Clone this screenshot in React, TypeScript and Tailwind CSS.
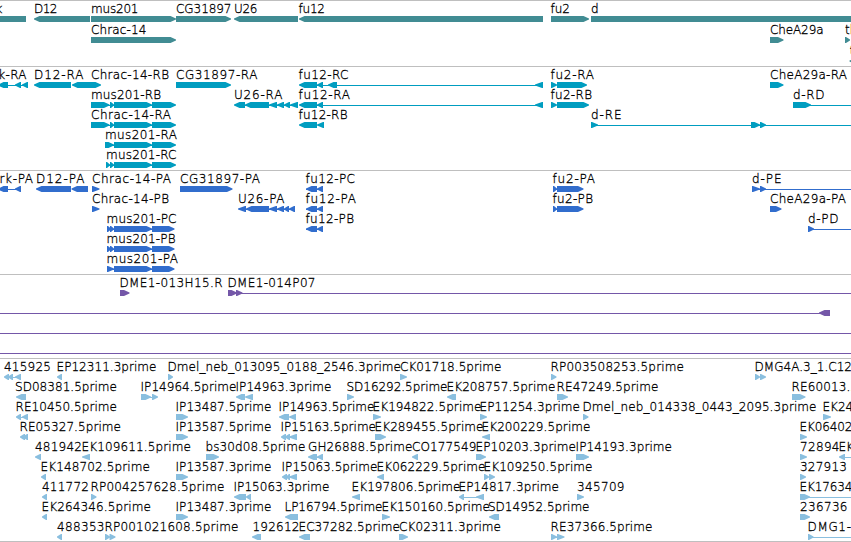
import React from "react";

type Dir = "l" | "r";
// [start, end, direction]
type Block = [number, number, Dir];
// [text, start, end] - end is left out when the label runs off the view
type Label = [string, number, number?];

type Row = {
  labels?: Label[];
  blocks?: Block[];
  lines?: [number, number][];
};

type TrackData = {
  name: string;
  color: string;
  height: number;
  pitch: number;
  rows: Row[];
};

const VIEW_WIDTH = 851;

const mus201Tail: Block[] = [
  [114, 152, "r"],
  [152, 176, "r"],
];

const mus201ProteinTail: Block[] = [
  [114, 152, "r"],
  [152, 174.5, "r"],
];

const genes: Row[] = [
  {
    labels: [
      ["k", -4.5],
      ["D12", 34, 58],
      ["mus201", 91, 139],
      ["CG31897", 176, 232],
      ["U26", 234, 258],
      ["fu12", 298.5, 325.5],
      ["fu2", 550.5, 570.5],
      ["d", 591],
    ],
    blocks: [
      [-20, 26, "l"],
      [34, 90, "l"],
      [91, 176, "r"],
      [176, 231, "r"],
      [234, 298, "l"],
      [299, 543, "l"],
      [551, 589, "r"],
      [591, 870, "r"],
    ],
  },
  {
    labels: [["Chrac-14", 91, 147], ["CheA29a", 770, 824], ["th", 845]],
    blocks: [
      [91, 176, "r"],
      [770, 783.5, "r"],
      [845, 850, "r"],
    ],
  },
  {
    labels: [["t", 849.7]],
    blocks: [[849.5, 870, "l"]],
  },
];

const transcripts: Row[] = [
  {
    labels: [
      ["rk-RA", -7, 27],
      ["D12-RA", 34, 84],
      ["Chrac-14-RB", 91, 169.5],
      ["CG31897-RA", 176, 258],
      ["fu12-RC", 298.5, 349],
      ["fu2-RA", 550.5, 594.5],
      ["CheA29a-RA", 770, 847.5],
    ],
    blocks: [
      [-2, 8, "l"],
      [15, 21, "l"],
      [22, 28, "l"],
      [34, 71, "l"],
      [72, 90.5, "l"],
      [90, 101, "r"],
      [176, 231, "r"],
      [299, 317, "l"],
      [317, 323, "l"],
      [328, 337, "l"],
      [535, 543, "l"],
      [551, 557, "r"],
      [557, 587, "r"],
      [770, 783.5, "r"],
    ],
    lines: [[0, 28], [317, 543]],
  },
  {
    labels: [
      ["mus201-RB", 91, 161.5],
      ["U26-RA", 234, 283],
      ["fu12-RA", 298.5, 350.5],
      ["fu2-RB", 550.5, 592.5],
      ["d-RD", 793, 825],
    ],
    blocks: [
      [91, 109.5, "r"],
      [110, 114, "r"],
      ...mus201Tail,
      [234, 245, "l"],
      [245, 269, "l"],
      [269, 277, "l"],
      [277, 284, "l"],
      [284, 290, "l"],
      [290, 298, "l"],
      [299, 317, "l"],
      [317, 323, "l"],
      [535, 543, "l"],
      [551, 557, "r"],
      [557, 589, "r"],
      [793, 811, "r"],
    ],
    lines: [[105, 160], [240, 298], [317, 543], [805, 851]],
  },
  {
    labels: [
      ["Chrac-14-RA", 91, 171.5],
      ["fu12-RB", 298.5, 348],
      ["d-RE", 591, 622],
    ],
    blocks: [
      [91, 109.5, "r"],
      [110, 114, "r"],
      ...mus201Tail,
      [299, 317, "l"],
      [317, 324, "l"],
      [591, 598, "r"],
      [751, 760, "r"],
      [760, 766, "r"],
    ],
    lines: [[105, 160], [591, 851]],
  },
  {
    labels: [["mus201-RA", 105, 177.5]],
    blocks: [[105, 114, "r"], ...mus201Tail],
    lines: [[110, 160]],
  },
  {
    labels: [["mus201-RC", 106, 177]],
    blocks: [[106, 110, "r"], [110, 114, "r"], ...mus201Tail],
    lines: [[106, 160]],
  },
];

const proteins: Row[] = [
  {
    labels: [
      ["rk-PA", -0.5, 33.5],
      ["D12-PA", 36, 85],
      ["Chrac-14-PA", 92, 171.5],
      ["CG31897-PA", 180, 260.5],
      ["fu12-PC", 305.5, 355.5],
      ["fu2-PA", 552.5, 595.5],
      ["d-PE", 752, 782],
    ],
    blocks: [
      [-2, 8, "l"],
      [15, 21, "l"],
      [36, 71, "l"],
      [71.5, 88, "l"],
      [92, 99.5, "r"],
      [180, 232.5, "r"],
      [306, 317, "l"],
      [317, 323, "l"],
      [553, 557, "r"],
      [557, 583.5, "r"],
      [752, 760, "r"],
      [760, 766, "r"],
    ],
    lines: [[0, 21], [306, 323], [553, 560], [752, 851]],
  },
  {
    labels: [
      ["Chrac-14-PB", 92, 169.5],
      ["U26-PA", 238, 285],
      ["fu12-PA", 305.5, 356.5],
      ["fu2-PB", 552.5, 593.5],
      ["CheA29a-PA", 770, 846.5],
    ],
    blocks: [
      [92, 99.5, "r"],
      [238, 246, "l"],
      [246, 269, "l"],
      [269, 277, "l"],
      [277, 284, "l"],
      [284, 289, "l"],
      [289, 295, "l"],
      [306, 317, "l"],
      [317, 323, "l"],
      [553, 557, "r"],
      [557, 583.5, "r"],
      [770, 781.5, "r"],
    ],
    lines: [[242, 295], [306, 323], [553, 560]],
  },
  {
    labels: [
      ["mus201-PC", 106.5, 177],
      ["fu12-PB", 305.5, 354.5],
      ["d-PD", 808, 839],
    ],
    blocks: [
      [107, 111, "r"],
      [110, 114, "r"],
      ...mus201ProteinTail,
      [306, 317, "l"],
      [317, 323, "l"],
      [808, 814, "r"],
    ],
    lines: [[107, 160], [306, 323], [808, 851]],
  },
  {
    labels: [["mus201-PB", 106.5, 176]],
    blocks: [[107, 111, "r"], [110, 114, "r"], ...mus201ProteinTail],
    lines: [[107, 160]],
  },
  {
    labels: [["mus201-PA", 106.5, 178.5]],
    blocks: [[107, 114, "r"], ...mus201ProteinTail],
    lines: [[107, 160]],
  },
];

const clones: Row[] = [
  {
    labels: [["DME1-013H15.R", 119.5, 223], ["DME1-014P07", 227.5, 316]],
    blocks: [
      [120, 129.5, "r"],
      [228, 237, "r"],
      [236, 242.5, "r"],
    ],
    lines: [[236, 851]],
  },
  { blocks: [[819, 830, "l"]], lines: [[0, 825]] },
  { lines: [[0, 851]] },
  { lines: [[0, 851]] },
];

const ests: Row[] = [
  {
    labels: [
      ["415925", 4, 51.5],
      ["EP12311.3prime", 56.5, 157],
      ["Dmel_neb_013095_0188_2546.3prime", 167.5, 401.5],
      ["CK01718.5prime", 400, 502],
      ["RP003508253.5prime", 550.5, 684.5],
      ["DMG4A.3_1.C12", 754.5, 852.5],
    ],
    blocks: [
      [4, 9, "l"],
      [8, 13, "l"],
      [15, 21, "l"],
      [57, 62, "l"],
      [168, 173, "r"],
      [400, 407, "r"],
      [551, 556.5, "r"],
      [755, 760, "r"],
      [760, 766, "r"],
    ],
    lines: [[5, 21]],
  },
  {
    labels: [
      ["SD08381.5prime", 15, 117.5],
      ["IP14964.5prime", 140.5, 237],
      ["IP14963.3prime", 235.5, 332],
      ["SD16292.5prime", 346.5, 448],
      ["EK208757.5prime", 446.5, 556],
      ["RE47249.5prime", 556.5, 659],
      ["RE60013.5prime", 791.5, 894],
    ],
    blocks: [
      [16, 26, "l"],
      [141, 151, "r"],
      [152, 158, "r"],
      [236, 245, "l"],
      [245, 253, "l"],
      [347, 354, "r"],
      [447, 456, "l"],
      [557, 568, "r"],
      [792, 805.5, "r"],
    ],
    lines: [[145, 156]],
  },
  {
    labels: [
      ["RE10450.5prime", 15.5, 117.5],
      ["IP13487.5prime", 175.5, 272],
      ["IP14963.5prime", 278.5, 375],
      ["EK194822.5prime", 372.5, 482],
      ["EP11254.3prime", 479.5, 580.5],
      ["Dmel_neb_014338_0443_2095.3prime", 582.5, 817],
      ["EK24", 822.5],
    ],
    blocks: [
      [16, 21, "l"],
      [22, 28, "l"],
      [176, 188, "r"],
      [279, 289, "l"],
      [289, 296, "l"],
      [373, 381, "r"],
      [480, 487, "r"],
      [583, 588.5, "r"],
      [823, 831, "r"],
    ],
    lines: [[17, 28]],
  },
  {
    labels: [
      ["RE05327.5prime", 19.5, 121.5],
      ["IP13587.5prime", 175.5, 272],
      ["IP15163.5prime", 280.5, 376.5],
      ["EK289455.5prime", 374.5, 484],
      ["EK200229.5prime", 481.5, 591],
      ["EK06402", 799.5, 853],
    ],
    blocks: [
      [20, 25, "l"],
      [23, 28, "l"],
      [176, 188, "r"],
      [281, 286, "l"],
      [285, 290, "l"],
      [289, 297, "l"],
      [375, 386, "r"],
      [482, 490, "l"],
      [800, 807, "r"],
    ],
  },
  {
    labels: [
      ["481942", 35, 82.5],
      ["EK109611.5prime", 81.5, 191.5],
      ["bs30d08.5prime", 205.5, 306],
      ["GH26888.5prime", 308, 413],
      ["CO177549", 412, 477],
      ["EP10203.3prime", 475.5, 576.5],
      ["IP14193.3prime", 575.5, 672.5],
      ["72894", 800, 840],
      ["EK", 838.5],
    ],
    blocks: [
      [35, 41, "l"],
      [82, 90, "l"],
      [206, 219, "r"],
      [308, 317, "l"],
      [317, 323, "l"],
      [412, 418, "l"],
      [476, 486, "r"],
      [576, 589, "r"],
      [800, 807, "r"],
      [839, 845, "l"],
    ],
    lines: [[311, 320], [841, 851]],
  },
  {
    labels: [
      ["EK148702.5prime", 40.5, 150.5],
      ["IP13587.3prime", 175.5, 272],
      ["IP15063.5prime", 281.5, 378],
      ["EK062229.5prime", 376.5, 486],
      ["EK109250.5prime", 483.5, 593],
      ["327913", 800, 847.5],
    ],
    blocks: [
      [41, 46, "l"],
      [176, 188, "r"],
      [282, 287, "l"],
      [286, 290, "l"],
      [289, 297, "l"],
      [377, 384, "l"],
      [484, 489, "r"],
      [489, 495, "r"],
      [800, 806, "r"],
    ],
  },
  {
    labels: [
      ["411772", 42, 89.5],
      ["RP004257628.5prime", 90.5, 225],
      ["IP15063.3prime", 233.5, 330],
      ["EK197806.5prime", 351.5, 461],
      ["EP14817.3prime", 458.5, 559.5],
      ["345709", 577, 625],
      ["EK17634", 799.5, 853],
    ],
    blocks: [
      [42, 47, "l"],
      [91, 96.5, "r"],
      [234, 246, "l"],
      [246, 251, "l"],
      [352, 360, "l"],
      [459, 464, "l"],
      [476, 484, "l"],
      [577, 584, "r"],
      [800, 810, "r"],
    ],
    lines: [[460, 484], [805, 851]],
  },
  {
    labels: [
      ["EK264346.5prime", 41.5, 151.5],
      ["IP13487.3prime", 175.5, 272],
      ["LP16794.5prime", 284.5, 383],
      ["EK150160.5prime", 381.5, 490.5],
      ["SD14952.5prime", 488, 590],
      ["236736", 800, 848],
    ],
    blocks: [
      [42, 47, "l"],
      [176, 188, "r"],
      [285, 298, "l"],
      [382, 390, "r"],
      [489, 499, "l"],
      [800, 810, "r"],
    ],
  },
  {
    labels: [
      ["488353", 57, 105],
      ["RP001021608.5prime", 104.5, 239],
      ["192612", 252.5, 300],
      ["EC37282.5prime", 298.5, 400.5],
      ["CK02311.3prime", 399, 501.5],
      ["RE37366.5prime", 550.5, 653],
      ["DMG1-", 807.5, 851.5],
    ],
    blocks: [
      [57, 62, "l"],
      [105, 110, "r"],
      [109.5, 115.5, "r"],
      [252, 261, "l"],
      [299, 310, "l"],
      [399, 408, "r"],
      [551, 557, "r"],
      [557, 564.5, "r"],
      [808, 813.5, "r"],
    ],
    lines: [[551, 560], [808, 851]],
  },
];

const tracks: TrackData[] = [
  { name: "Genes", color: "#418c93", height: 65, pitch: 21, rows: genes },
  { name: "Transcripts", color: "#009dc0", height: 103, pitch: 20, rows: transcripts },
  { name: "Proteins", color: "#316dcd", height: 103, pitch: 20, rows: proteins },
  { name: "Clones", color: "#7457a8", height: 83, pitch: 20, rows: clones },
  { name: "ESTs", color: "#8abfdf", height: 182, pitch: 20, rows: ests },
];

const blockPoints = ([start, end, dir]: Block) => {
  const width = end - start;
  // short features are drawn as a bare arrow head
  const tip = width <= 8 ? width - 1 : 5.5;
  if (dir === "r") {
    return `${start},15 ${end - tip},15 ${end},17.6 ${end},18.6 ${end - tip},21 ${start},21`;
  }
  return `${end},15 ${start + tip},15 ${start},17.6 ${start},18.6 ${start + tip},21 ${end},21`;
};

const Track = ({ name, color, height, pitch, rows }: TrackData) => {
  return (
    <section aria-label={name} className="border-t border-[#bfbfbf]">
      <svg width={VIEW_WIDTH} height={height} className="block overflow-hidden">
        {rows.map((row, idx) => (
          <g key={idx} transform={`translate(0 ${idx * pitch})`}>
            <g fill={color}>
              {row.lines?.map(([start, end], i) => (
                <rect key={i} x={start} y={18} width={end - start} height={1} />
              ))}
              {row.blocks?.map((block, i) => (
                <polygon key={i} points={blockPoints(block)} />
              ))}
            </g>
            {row.labels?.map(([text, start, end], i) => (
              <text
                key={i}
                x={start}
                y={12}
                textLength={end === undefined ? undefined : end - start - 0.5}
                className="fill-black stroke-black stroke-[0.3px]"
              >
                {text}
              </text>
            ))}
          </g>
        ))}
      </svg>
    </section>
  );
};

const App = () => {
  return (
    <main className="w-[851px] h-[542px] flex flex-col overflow-hidden bg-white border-b border-[#bfbfbf] font-['DejaVu_Sans',sans-serif] font-extralight text-[12px]">
      {tracks.map((track) => (
        <Track key={track.name} {...track} />
      ))}
    </main>
  );
};

export default App;
